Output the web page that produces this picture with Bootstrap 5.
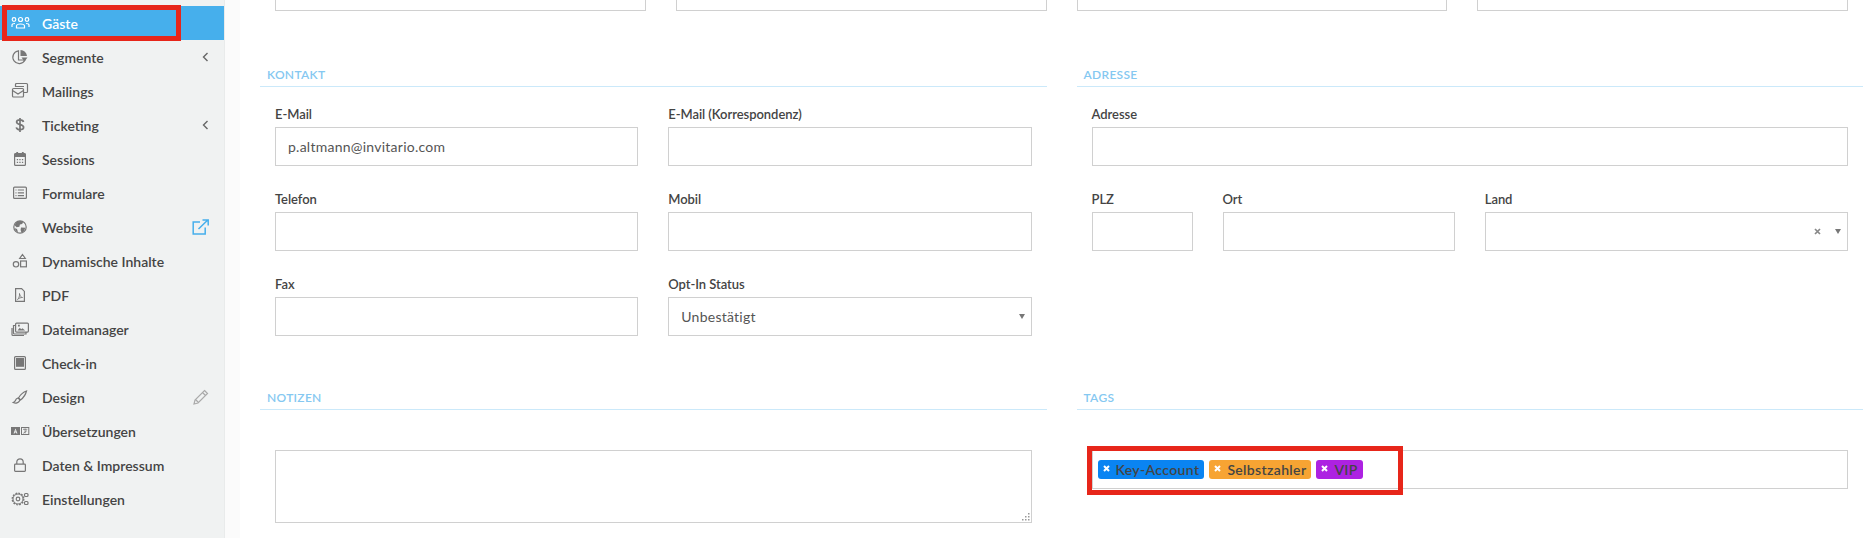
<!DOCTYPE html>
<html lang="de">
<head>
<meta charset="utf-8">
<title>Gäste</title>
<link href="https://cdn.jsdelivr.net/npm/bootstrap@5.3.0/dist/css/bootstrap.min.css" rel="stylesheet">
<style>
html,body{height:538px;overflow:hidden;background:#fff;}
body{font-family:"Lato","Liberation Sans",sans-serif;color:#444;font-size:14px;position:relative;}
.side-rail{width:224px;height:538px;background:#f0f2f2;padding-top:6px;flex:none;}
.side-strip{width:16px;height:538px;background:#fbfbfb;border-left:1px solid #e9ebeb;flex:none;}
.side-rail .nav-link{height:34px;padding:0 15px 0 8px;color:#444;font-weight:600;font-size:14px;display:flex;align-items:center;letter-spacing:0;}
.side-rail .nav-link.is-current{background:#46afec;color:#fff;}
.ico{width:24px;height:20px;margin-right:10px;flex:none;fill:none;stroke:#777;stroke-width:1.2;}
.is-current .ico{stroke:#fff;}
.ico .solid{fill:#777;stroke:none;}
.ico .knock{fill:#f0f2f2;stroke:none;}
.side-end{margin-left:auto;flex:none;}
.work{width:1629px;padding:0 6px 0 20px;flex:none;margin-top:-28px;}
.sheet-row{--bs-gutter-x:30px;--bs-gutter-y:0;}
.sec-head{font-size:12px;font-weight:600;color:#85c8f1;text-transform:uppercase;border-bottom:1px solid #cbe9fa;padding:0 0 4px 7px;line-height:15px;letter-spacing:.3px;margin-bottom:0;}
.fld-row{--bs-gutter-x:30px;--bs-gutter-y:0;margin-left:0;margin-right:0;}
.fld-label{font-size:13px;font-weight:600;color:#444;line-height:16px;margin:0 0 5px;display:block;letter-spacing:-.05px;}
.fld-box.form-control{height:39px;border:1px solid #d0d0d0;border-radius:0;font-size:14px;color:#555;padding:0 12px;box-shadow:none;letter-spacing:.25px;font-family:inherit;}
.fld-gap{margin-bottom:25px;}
.top-row{height:39px;margin-bottom:56px;margin-left:0;margin-right:0;}
.block-a{height:323px;}
.area-wrap{position:relative;}
textarea.fld-box.form-control{height:73px;resize:none;}
.grip{position:absolute;right:17px;bottom:2px;}
.pick{display:flex;align-items:center;justify-content:space-between;}
.tri{width:0;height:0;border-left:3px solid transparent;border-right:3px solid transparent;border-top:5px solid #777;margin-right:-6px;margin-left:14px;}
.clear-x{margin-left:auto;flex:none;}
.tag-box.form-control{display:flex;align-items:center;gap:5px;padding:0 5px;}
.tag-pill{display:inline-flex;align-items:center;height:19px;border-radius:3px;padding:0 5px;font-size:14px;font-weight:600;color:#444;line-height:1;letter-spacing:.35px;}
.tag-x{margin-right:6px;position:relative;top:-1px;flex:none;}
.tag-blue{background:#0a84f2;}
.tag-orange{background:#f7a433;}
.tag-purple{background:#ad22e2;}
.mark-frame{position:absolute;border:5px solid #e7261a;pointer-events:none;}
.mark-one{left:2px;top:5px;width:179px;height:36px;}
.mark-two{left:1087px;top:446px;width:316px;height:49px;}
.pt-hdr{padding-top:19px;}
.pt-wide{padding-top:40px;}
</style>
</head>
<body>
<div class="d-flex">
  <aside class="side-rail">
    <ul class="nav flex-column">
      <li class="nav-item"><a class="nav-link is-current" href="#"><svg class="ico" viewBox="0 0 24 20"><circle cx="12.500" cy="6.500" r="2"/><circle cx="6" cy="6.500" r="1.800"/><circle cx="19" cy="6.500" r="1.800"/><path d="M8.500 15v-2c0-1.300 1.500-2 4-2s4 .7 4 2v2zM4 14v-2c0-1 1-1.500 3-1.500M21 14v-2c0-1-1-1.500-3-1.500"/></svg>Gäste</a></li>
      <li class="nav-item"><a class="nav-link" href="#"><svg class="ico" viewBox="0 0 24 20"><path d="M10.500 3.800a6.400 6.400 0 1 0 6.500 9.200h-6.500z"/><path class="solid" d="M12.500 3a6.500 6.500 0 0 1 6.500 6h-6.500zM13.500 10.500h6l-3 4z"/></svg>Segmente<svg class="side-end" width="7" height="12" viewBox="0 0 7 12" fill="none" stroke="#666" stroke-width="1.400"><path d="M5.500 2 1.500 6l4 4"/></svg></a></li>
      <li class="nav-item"><a class="nav-link" href="#"><svg class="ico" viewBox="0 0 24 20"><path d="M7.500 6V3.500c0-.6.400-1 1-1h10c.6 0 1 .4 1 1v7c0 .6-.4 1-1 1H16"/><rect x="4.500" y="7.500" width="11" height="8.500" rx="1"/><path d="m4.500 9.500 5.500 3.500 5.500-3.500M8 5.500h8"/></svg>Mailings</a></li>
      <li class="nav-item"><a class="nav-link" href="#"><svg class="ico" viewBox="0 0 24 20" style="stroke-width:1.700"><path d="M15.500 7c-.3-1.500-1.600-2.200-3.500-2.200-2 0-3.400.9-3.400 2.300 0 3.400 7 1.700 7 5.200 0 1.500-1.500 2.400-3.600 2.400-2 0-3.400-.9-3.700-2.400M12 3v14"/></svg>Ticketing<svg class="side-end" width="7" height="12" viewBox="0 0 7 12" fill="none" stroke="#666" stroke-width="1.400"><path d="M5.500 2 1.500 6l4 4"/></svg></a></li>
      <li class="nav-item"><a class="nav-link" href="#"><svg class="ico" viewBox="0 0 24 20"><rect x="6.600" y="4.600" width="10.800" height="11.800" rx="1"/><path class="solid" d="M6.500 4.500h11V8h-11zM8.300 3h1.800v2H8.300zM13.900 3h1.800v2h-1.800zM8.800 10h1.300v1.300H8.800zM11.300 10h1.300v1.300h-1.300zM13.900 10h1.300v1.300h-1.300zM8.800 12.700h1.300V14H8.800zM11.300 12.700h1.300V14h-1.300zM13.900 12.700h1.300V14h-1.300z"/></svg>Sessions</a></li>
      <li class="nav-item"><a class="nav-link" href="#"><svg class="ico" viewBox="0 0 24 20"><rect x="5.600" y="4.100" width="12.800" height="11.300" rx="1"/><path d="M9.800 7H16M9.800 9.800H16M9.800 12.600H16M7.500 7h1M7.500 9.800h1M7.500 12.600h1"/></svg>Formulare</a></li>
      <li class="nav-item"><a class="nav-link" href="#"><svg class="ico" viewBox="0 0 24 20"><circle cx="12" cy="10" r="6.200"/><path class="solid" d="M8.200 5.200c2-1.300 5-1.500 7-.5l-1 2.300-2.300.5-.5 2.300-2.800.4-2-1.900zM13 10.500l4.300.3-1.300 3.500-2.500 1.500-.9-2.800zM6.500 11l2.500 1 1 3-1.800-.6z"/></svg>Website<svg class="side-end" width="17" height="16" viewBox="0 0 17 16" fill="none" stroke="#46afec" stroke-width="1.500"><path d="M8 3H1.200v12h12V8.500M6.500 10 15.500 1.200M10.500 1h5.700v5.500"/></svg></a></li>
      <li class="nav-item"><a class="nav-link" href="#"><svg class="ico" viewBox="0 0 24 20"><path d="m14.500 3.500 2.800 4h-5.600z"/><circle cx="8" cy="13.300" r="2.700"/><rect x="12.600" y="10" width="5.800" height="5.800"/></svg>Dynamische Inhalte</a></li>
      <li class="nav-item"><a class="nav-link" href="#"><svg class="ico" viewBox="0 0 24 20"><path d="M7.600 3.600h6l2.800 2.800v9.900H7.600z"/><path d="M9.500 14.500c1.300-1 2.300-3.500 2-6 .4 2.500 1.300 3.500 3 4-1.800 0-3.500.5-5 2z" stroke-width=".9"/></svg>PDF</a></li>
      <li class="nav-item"><a class="nav-link" href="#"><svg class="ico" viewBox="0 0 24 20"><rect x="7.600" y="4.100" width="12.800" height="9" rx="1"/><path d="M7.500 6.500H5.500v7.500c0 .6.400 1 1 1H18v-1.900M4 9v6.500c0 .5.400 1 1 1h11"/><path class="solid" d="m9.500 11.500 2.300-2.800 1.400 1.600 1.200-1 2.800 2.200zM10 5.700h1.800v1.800H10z"/></svg>Dateimanager</a></li>
      <li class="nav-item"><a class="nav-link" href="#"><svg class="ico" viewBox="0 0 24 20"><rect x="6.600" y="3.600" width="10.800" height="12.800" rx="1"/><path class="solid" d="M8 5h8v8.800H8z"/></svg>Check-in</a></li>
      <li class="nav-item"><a class="nav-link" href="#"><svg class="ico" viewBox="0 0 24 20"><path d="M18.500 4c-2.500.8-6 3.500-8 7l2 2c3-2.300 5.300-6 6-9z"/><path d="M10 11c-1.700.5-2.200 1.300-2.600 2.500-.3.900-1 1.500-2.200 2 2.500 1.200 5.500.5 6.400-1.700.3-.7.200-1 .1-1.300z"/></svg>Design<svg class="side-end" width="16" height="16" viewBox="0 0 16 16" fill="none" stroke="#aaa" stroke-width="1.200"><path d="M11.500 1.500 14.500 4.500 5 14l-4 1 1-4zM9.500 3.500l3 3M3 11l2 2"/></svg></a></li>
      <li class="nav-item"><a class="nav-link" href="#"><svg class="ico" viewBox="0 0 24 20"><path class="solid" d="M3 6h9v8H3z"/><path class="knock" d="m7.500 7.500 2 5H8.400l-.3-1H6.900l-.3 1H5.500zM7.300 9.300l-.2.9h.8z"/><rect x="13.500" y="6.500" width="7.300" height="7" stroke-width="1"/><path d="M15 8.300h4.300M17.100 7.500v4.800M15.300 12.300l3.600-2.600" stroke-width=".8"/></svg>Übersetzungen</a></li>
      <li class="nav-item"><a class="nav-link" href="#"><svg class="ico" viewBox="0 0 24 20"><rect x="6.600" y="9.100" width="10.800" height="7.300" rx=".8"/><path d="M8.800 9V7a3.200 3.200 0 0 1 6.400 0v2"/></svg>Daten &amp; Impressum</a></li>
      <li class="nav-item"><a class="nav-link" href="#"><svg class="ico" viewBox="0 0 24 20"><circle cx="10" cy="10" r="1.800"/><circle cx="10" cy="10" r="5" stroke-width="1"/><circle cx="10" cy="10" r="5.800" stroke-width="1.300" stroke-dasharray="1.800 1.200"/><rect x="16.500" y="4.500" width="3.500" height="3" rx="1"/><rect x="16.500" y="12.500" width="3.500" height="3" rx="1"/></svg>Einstellungen</a></li>
    </ul>
  </aside>
  <div class="side-strip"></div>
  <main class="work">
    <div class="row sheet-row top-row">
      <div class="col-3"><input class="form-control fld-box" type="text" aria-label="Feld 1"></div>
      <div class="col-3"><input class="form-control fld-box" type="text" aria-label="Feld 2"></div>
      <div class="col-3"><input class="form-control fld-box" type="text" aria-label="Feld 3"></div>
      <div class="col-3"><input class="form-control fld-box" type="text" aria-label="Feld 4"></div>
    </div>
    <div class="row sheet-row block-a">
      <div class="col-6">
        <h6 class="sec-head">Kontakt</h6>
        <div class="row fld-row pt-hdr">
          <div class="col-6 fld-gap"><label class="fld-label">E-Mail</label><input class="form-control fld-box" type="text" value="p.altmann@invitario.com"></div>
          <div class="col-6 fld-gap"><label class="fld-label">E-Mail (Korrespondenz)</label><input class="form-control fld-box" type="text"></div>
          <div class="col-6 fld-gap"><label class="fld-label">Telefon</label><input class="form-control fld-box" type="text"></div>
          <div class="col-6 fld-gap"><label class="fld-label">Mobil</label><input class="form-control fld-box" type="text"></div>
          <div class="col-6 fld-gap"><label class="fld-label">Fax</label><input class="form-control fld-box" type="text"></div>
          <div class="col-6 fld-gap"><label class="fld-label">Opt-In Status</label><div class="form-control fld-box pick"><span>Unbestätigt</span><i class="tri"></i></div></div>
        </div>
      </div>
      <div class="col-6">
        <h6 class="sec-head">Adresse</h6>
        <div class="row fld-row pt-hdr">
          <div class="col-12 fld-gap"><label class="fld-label">Adresse</label><input class="form-control fld-box" type="text"></div>
          <div class="col-2 fld-gap"><label class="fld-label">PLZ</label><input class="form-control fld-box" type="text"></div>
          <div class="col-4 fld-gap"><label class="fld-label">Ort</label><input class="form-control fld-box" type="text"></div>
          <div class="col-6 fld-gap"><label class="fld-label">Land</label><div class="form-control fld-box pick"><svg class="clear-x" width="7" height="7" viewBox="0 0 7 7" stroke="#888" stroke-width="1.700"><path d="m1 1 5 5M6 1 1 6"/></svg><i class="tri"></i></div></div>
        </div>
      </div>
    </div>
    <div class="row sheet-row">
      <div class="col-6">
        <h6 class="sec-head">Notizen</h6>
        <div class="row fld-row pt-wide">
          <div class="col-12 area-wrap"><textarea class="form-control fld-box" aria-label="Notizen"></textarea>
            <svg class="grip" width="9" height="9" viewBox="0 0 9 9" fill="#999"><rect x="7" y="1" width="1.500" height="1.500"/><rect x="7" y="4" width="1.500" height="1.500"/><rect x="4" y="4" width="1.500" height="1.500"/><rect x="7" y="7" width="1.500" height="1.500"/><rect x="4" y="7" width="1.500" height="1.500"/><rect x="1" y="7" width="1.500" height="1.500"/></svg>
          </div>
        </div>
      </div>
      <div class="col-6">
        <h6 class="sec-head">Tags</h6>
        <div class="row fld-row pt-wide">
          <div class="col-12"><div class="form-control fld-box tag-box">
            <span class="tag-pill tag-blue"><svg class="tag-x" width="7" height="7" viewBox="0 0 7 7" stroke="#fff" stroke-width="2"><path d="m1 1 5 5M6 1 1 6"/></svg>Key-Account</span>
            <span class="tag-pill tag-orange"><svg class="tag-x" width="7" height="7" viewBox="0 0 7 7" stroke="#fff" stroke-width="2"><path d="m1 1 5 5M6 1 1 6"/></svg>Selbstzahler</span>
            <span class="tag-pill tag-purple"><svg class="tag-x" width="7" height="7" viewBox="0 0 7 7" stroke="#fff" stroke-width="2"><path d="m1 1 5 5M6 1 1 6"/></svg>VIP</span>
          </div></div>
        </div>
      </div>
    </div>
  </main>
</div>
<div class="mark-frame mark-one"></div>
<div class="mark-frame mark-two"></div>
<script src="https://cdn.jsdelivr.net/npm/bootstrap@5.3.0/dist/js/bootstrap.bundle.min.js"></script>
</body>
</html>
